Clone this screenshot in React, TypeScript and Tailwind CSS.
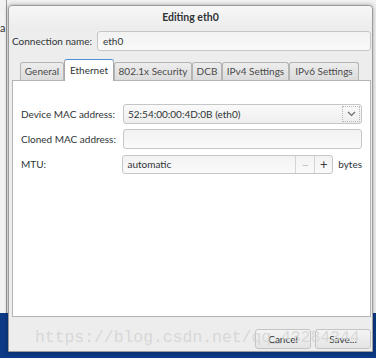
import React from "react";

const font = { fontFamily: 'Lato, "Open Sans", sans-serif' };

function Tab({ label, w, active }: { label: string; w: string; active?: boolean }) {
  if (active) {
    return (
      <div className={`relative -mb-px flex h-[22px] items-center justify-center whitespace-nowrap rounded-t-[3px] border border-b-0 border-[#a8a8a8] border-t-[#4a90d9] bg-white text-[10px] text-[#2e3436] ${w}`}>
        {label}
      </div>
    );
  }
  return (
    <div className={`mt-[3px] flex h-[18px] items-center justify-center whitespace-nowrap rounded-t-[3px] border border-b-0 border-[#b4b4b4] bg-gradient-to-b from-[#ededed] to-[#dcdcdc] text-[10px] text-[#4a4a4a] ${w}`}>
      {label}
    </div>
  );
}

export default function App() {
  return (
    <div
      className="relative h-[358px] w-[376px] overflow-hidden bg-[#f2f2f2]"
      style={font}
    >
      {/* desktop bits */}
      <div className="absolute left-0 top-[313px] h-[45px] w-[376px] bg-[#0c3a84]" />
      <div className="absolute left-[6px] top-0 h-[313px] w-px bg-[#9a9a9a]" />
      <div className="absolute left-0 top-[20px] text-[11px] text-[#333]">a</div>

      {/* dialog window */}
      <div className="absolute left-[8px] top-[5px] flex h-[347px] w-[365px] flex-col rounded-t-[4px] border border-[#9c9c9c] bg-[#ededed] shadow-[0_0_4px_rgba(0,0,0,0.35)]">
        <div className="flex h-[23px] items-center justify-center rounded-t-[4px] bg-gradient-to-b from-[#f7f7f7] to-[#ececec] text-[10.5px] font-bold text-[#2e3436]">
          Editing eth0
        </div>

        <div className="flex flex-col pl-[3px] pr-[1px]">
          <div className="mt-[2px] flex h-[20px] items-center">
            <span className="w-[85px] whitespace-nowrap text-[10px] text-[#2e3436]">Connection name:</span>
            <div className="flex h-[20px] flex-1 items-center rounded-[3px] border border-[#c6c6c6] bg-gradient-to-b from-[#f2f2f2] to-[#fafafa] px-[5px] text-[10px] text-[#2e3436]">
              eth0
            </div>
          </div>

          <div className="mt-[8px] flex items-end pl-[8px]">
            <Tab label="General" w="w-[44px]" />
            <Tab label="Ethernet" w="w-[50px]" active />
            <Tab label="802.1x Security" w="w-[78px]" />
            <Tab label="DCB" w="w-[30px]" />
            <Tab label="IPv4 Settings" w="w-[67px]" />
            <Tab label="IPv6 Settings" w="w-[70px]" />
          </div>

          <div className="flex h-[237px] flex-col gap-[5px] border border-[#b4b4b4] bg-white pl-[8px] pr-[8px] pt-[23px]">
            <div className="flex h-[20px] items-center">
              <span className="w-[102px] whitespace-nowrap text-[10px] text-[#2e3436]">Device MAC address:</span>
              <div className="flex h-[20px] flex-1 items-center justify-between rounded-[3px] border border-[#c6c6c6] bg-gradient-to-b from-[#fafafa] to-[#eeeeee] pl-[4px] text-[10px] text-[#2e3436]">
                <span>52:54:00:00:4D:0B (eth0)</span>
                <div className="mr-[1px] flex h-[16px] w-[18px] items-center justify-center border border-dotted border-[#b8b8b8]">
                  <svg width="9" height="6" viewBox="0 0 9 6">
                    <path d="M1 1 L4.5 4.5 L8 1" stroke="#6a6a6a" strokeWidth="1.2" fill="none" />
                  </svg>
                </div>
              </div>
            </div>
            <div className="flex h-[20px] items-center">
              <span className="w-[102px] whitespace-nowrap text-[10px] text-[#2e3436]">Cloned MAC address:</span>
              <div className="h-[20px] flex-1 rounded-[3px] border border-[#c6c6c6] bg-gradient-to-b from-[#f2f2f2] to-[#fafafa]" />
            </div>
            <div className="mt-[1px] flex h-[19px] items-center">
              <span className="w-[102px] whitespace-nowrap text-[10px] text-[#2e3436]">MTU:</span>
              <div className="flex h-[19px] w-[212px] items-center rounded-[3px] border border-[#c6c6c6] bg-gradient-to-b from-[#f2f2f2] to-[#fafafa] text-[10px] text-[#2e3436]">
                <span className="flex-1 pl-[4px]">automatic</span>
                <div className="flex h-full w-[19px] items-center justify-center border-l border-[#d4d4d4] text-[12px] text-[#c0c0c0]">−</div>
                <div className="flex h-full w-[18px] items-center justify-center border-l border-[#d4d4d4] text-[13px] text-[#3a3a3a]">+</div>
              </div>
              <span className="ml-[5px] text-[10px] text-[#2e3436]">bytes</span>
            </div>
          </div>

          <div className="mt-[12px] flex justify-end gap-[4px]">
            <div className="flex h-[20px] w-[56px] items-center justify-center rounded-[3px] border border-[#c4c4c4] bg-gradient-to-b from-[#f4f4f4] to-[#e4e4e4] text-[10px] text-[#2e3436]">
              Cancel
            </div>
            <div className="flex h-[20px] w-[56px] items-center justify-center rounded-[3px] border border-[#c4c4c4] bg-gradient-to-b from-[#f4f4f4] to-[#e4e4e4] text-[10px] text-[#2e3436]">
              Save...
            </div>
          </div>
        </div>
      </div>

      {/* watermark */}
      <div
        className="pointer-events-none absolute left-[35px] top-[327px] text-[16.4px] leading-[22px] text-[#d2d2d2]/80"
        style={{ fontFamily: '"Liberation Mono", monospace' }}
      >
        https://blog.csdn.net/qq_43284344
      </div>
    </div>
  );
}
